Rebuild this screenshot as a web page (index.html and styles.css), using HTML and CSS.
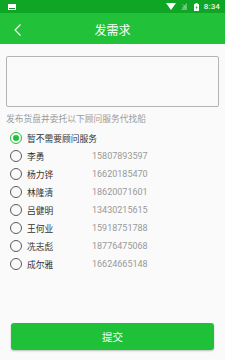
FILE: index.html
```html
<!DOCTYPE html>
<html lang="zh">
<head>
<meta charset="utf-8">
<title>发需求</title>
<link rel="stylesheet" href="styles.css">
</head>
<body>
<div class="page">
  <div class="status">
    <svg class="st-img" width="8" height="6" viewBox="0 0 8 6"><rect x="0" y="0" width="8" height="6" fill="#fff"/><rect x="1" y="4" width="6" height="1" fill="#1a8a2a"/></svg>
    <div class="st-right">
      <svg class="st-wifi" width="10" height="7" viewBox="0 0 10 7"><path d="M0 0 H10 L5 7 Z" fill="#fff"/></svg>
      <svg class="st-sim" width="6" height="7" viewBox="0 0 6 7"><path d="M0 7 L6 0 V7 Z" fill="#fff" opacity="0.35"/><path d="M1 1 L5 5 M5 1 L1 5" stroke="#fff" stroke-opacity="0.35" stroke-width="0.8"/></svg>
      <svg class="st-bat" width="5" height="8" viewBox="0 0 5 8"><rect x="1.5" y="0" width="2" height="1" fill="#fff"/><rect x="0" y="1" width="5" height="7" rx="0.5" fill="#fff"/><path d="M2.8 2 L1.5 4.8 H2.6 L2.2 7 L3.6 4 H2.5 Z" fill="#0fa626"/></svg>
      <span class="st-time">8:34</span>
    </div>
  </div>
  <div class="appbar">
    <svg class="back" width="8" height="12" viewBox="0 0 8 12"><path d="M6.5 0.5 L1 6 L6.5 11.5" fill="none" stroke="#fff" stroke-width="1.1"/></svg>
    <span class="title">发需求</span>
  </div>
  <div class="content">
    <div class="input-box"></div>
    <div class="hint">发布货盘并委托以下顾问服务代找船</div>
    <ul class="options">
      <li class="opt checked"><span class="radio"></span><span class="name">暂不需要顾问服务</span></li>
      <li class="opt"><span class="radio"></span><span class="name">李勇</span><span class="phone">15807893597</span></li>
      <li class="opt"><span class="radio"></span><span class="name">杨力铧</span><span class="phone">16620185470</span></li>
      <li class="opt"><span class="radio"></span><span class="name">林隆清</span><span class="phone">18620071601</span></li>
      <li class="opt"><span class="radio"></span><span class="name">吕健明</span><span class="phone">13430215615</span></li>
      <li class="opt"><span class="radio"></span><span class="name">王何业</span><span class="phone">15918751788</span></li>
      <li class="opt"><span class="radio"></span><span class="name">冼志彪</span><span class="phone">18776475068</span></li>
      <li class="opt"><span class="radio"></span><span class="name">成尔雅</span><span class="phone">16624665148</span></li>
    </ul>
  </div>
  <div class="submit">提交</div>
</div>
</body>
</html>
```

FILE: styles.css
```css
html, body {
  margin: 0;
  padding: 0;
}
body {
  background: #fafafa;
  font-family: Roboto, "Noto Sans CJK SC", sans-serif;
}
.page {
  width: 225px;
  height: 360px;
  display: flex;
  flex-direction: column;
  overflow: hidden;
}
.status {
  height: 13px;
  background: #0fa626;
  display: flex;
  align-items: center;
  padding: 0 5px 0 8px;
  flex-shrink: 0;
}
.st-img {
  display: block;
}
.st-right {
  margin-left: auto;
  display: flex;
  align-items: center;
}
.st-wifi { display: block; margin-right: 5px; }
.st-sim { display: block; margin-right: 7px; }
.st-bat { display: block; margin-right: 5px; }
.st-time {
  color: #e8f6ea;
  font-size: 8px;
  font-weight: 500;
  line-height: 13px;
  letter-spacing: 0.1px;
}
.appbar {
  height: 31px;
  background: #21c13a;
  display: flex;
  align-items: center;
  justify-content: center;
  position: relative;
  flex-shrink: 0;
}
.back {
  position: absolute;
  left: 14px;
  top: 11px;
  display: block;
}
.title {
  color: #fff;
  font-family: "Noto Sans CJK SC", sans-serif;
  font-size: 12px;
  line-height: 16px;
  margin-top: 2px;
}
.content {
  flex: 1;
  display: flex;
  flex-direction: column;
}
.input-box {
  margin: 12px 6px 0 6px;
  height: 49px;
  border: 1px solid #b4b4b4;
  border-radius: 2px;
  background: #fafafa;
}
.hint {
  margin: 6px 0 0 6px;
  font-family: "Noto Sans CJK SC", sans-serif;
  font-size: 8.75px;
  line-height: 12px;
  color: #9a9a9a;
  white-space: nowrap;
}
.options {
  list-style: none;
  margin: 4px 0 0 0;
  padding: 0 0 0 10px;
}
.opt {
  height: 18px;
  display: flex;
  align-items: center;
}
.radio {
  width: 12px;
  height: 12px;
  box-sizing: border-box;
  border: 1.4px solid #5a5a5a;
  border-radius: 50%;
  flex-shrink: 0;
  display: flex;
  align-items: center;
  justify-content: center;
}
.checked .radio {
  border-color: #21c13a;
}
.checked .radio::after {
  content: "";
  width: 6px;
  height: 6px;
  border-radius: 50%;
  background: #21c13a;
}
.name {
  margin-left: 5px;
  width: 65px;
  font-family: "Noto Sans CJK SC", sans-serif;
  font-size: 8.75px;
  color: #333;
  white-space: nowrap;
}
.phone {
  font-family: Roboto, sans-serif;
  font-size: 9px;
  color: #999;
}
.submit {
  margin: 0 11px 10px 11px;
  height: 27px;
  background: #1fc138;
  border-radius: 3px;
  box-shadow: 0 1px 2px rgba(0,0,0,0.25);
  color: #fff;
  font-family: "Noto Sans CJK SC", sans-serif;
  font-size: 10.5px;
  display: flex;
  align-items: center;
  justify-content: center;
  flex-shrink: 0;
}
```
